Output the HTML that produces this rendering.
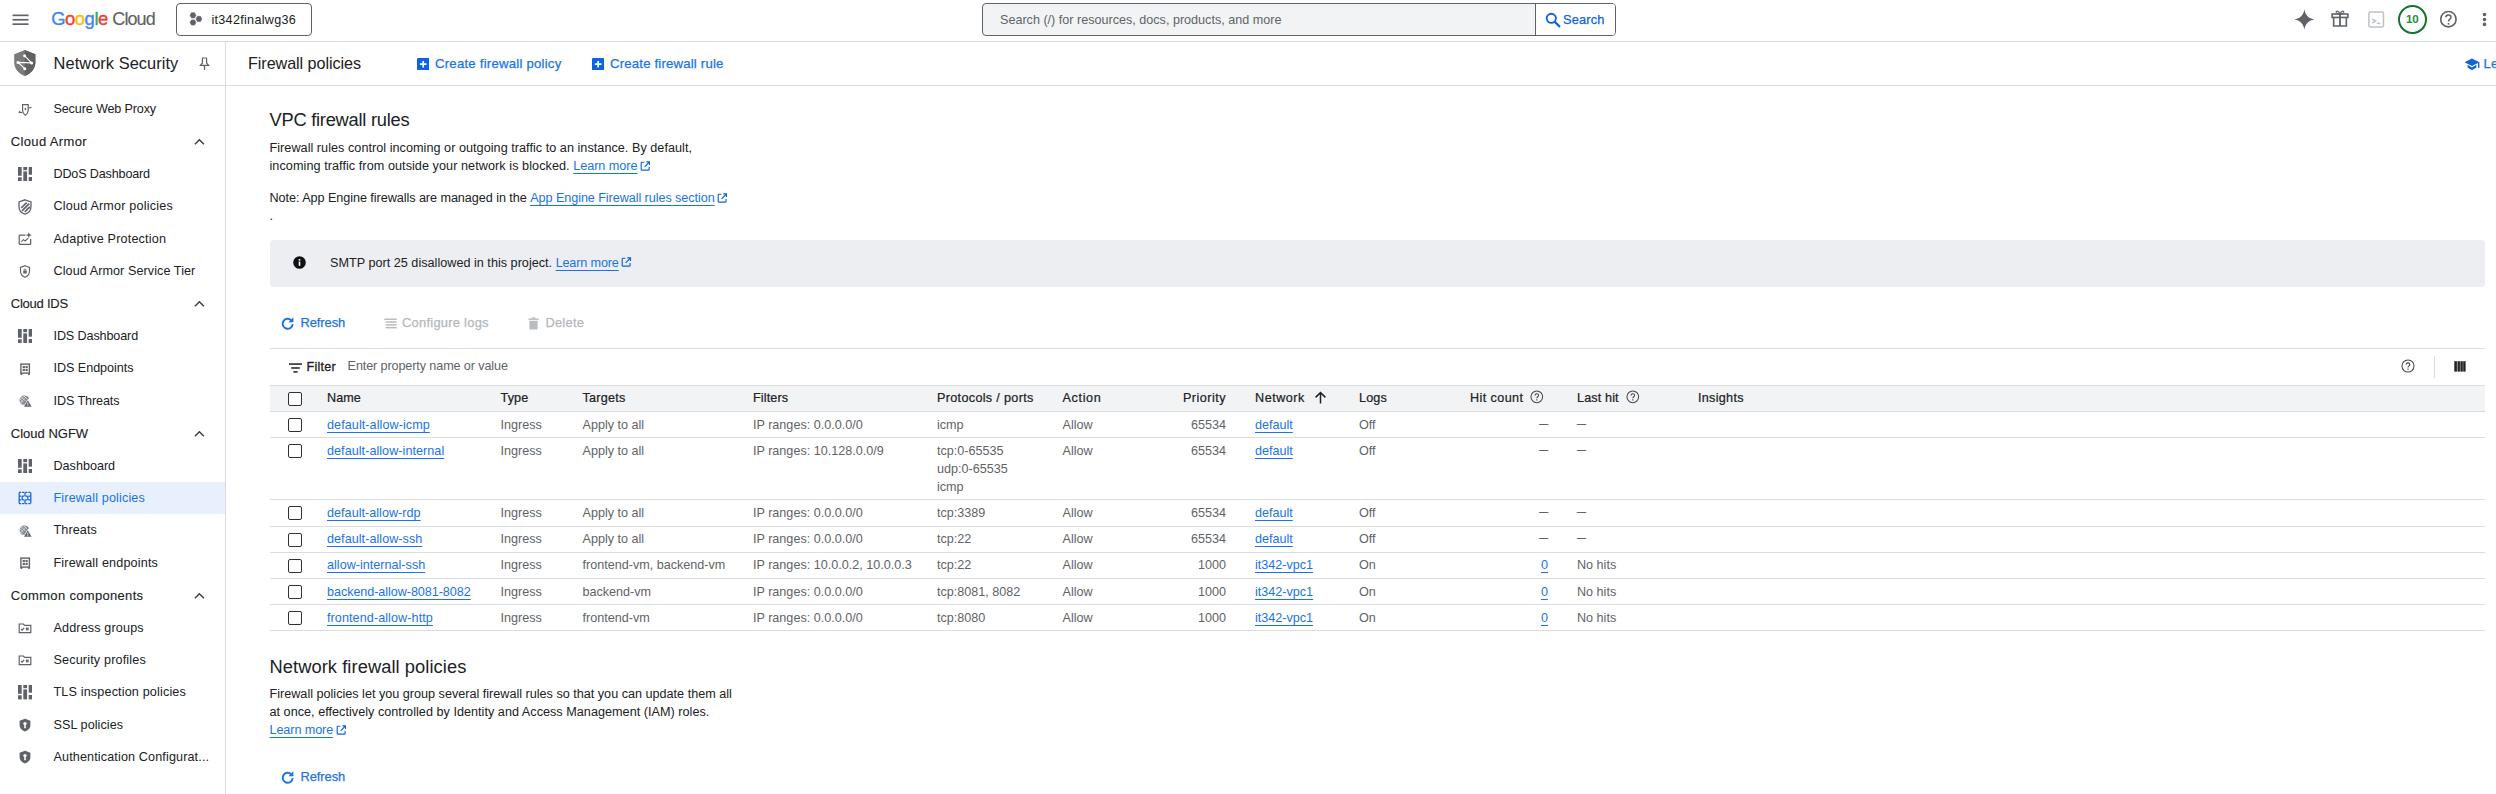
<!DOCTYPE html>
<html lang="en">
<head>
<meta charset="utf-8">
<title>Firewall policies – Network Security – it342finalwg36 – Google Cloud console</title>
<style>
*{box-sizing:border-box;margin:0;padding:0}
html,body{width:2496px;height:794px;overflow:hidden;background:#fff}
body{font-family:"Liberation Sans",Arial,sans-serif;font-size:12.6px;color:#202124;position:relative}
a{color:#1a73e8;text-decoration:underline;text-underline-offset:3px;text-decoration-thickness:1px}
svg{display:block}
.abs{position:absolute}
/* top bar */
#topbar{position:absolute;left:0;top:0;width:2496px;height:42px;border-bottom:1px solid #dadce0;background:#fff}
#subbar{position:absolute;left:0;top:42px;width:2496px;height:44px;border-bottom:1px solid #dadce0;background:#fff}
#side{position:absolute;left:0;top:42px;width:226px;height:752px;border-right:1px solid #dadce0}
.gs{-webkit-text-stroke:0.25px currentColor}
.sec .gs{-webkit-text-stroke:0.12px currentColor}
/* sidebar */
.nav{position:absolute;left:0;width:225px;height:32.4px;line-height:32.4px;white-space:nowrap}
.nav .t{position:absolute;left:53.5px;top:0}
.nav .ic{position:absolute;left:18px;top:9.2px;width:14px;height:14px}
.sec{position:absolute;left:0;width:225px;height:32.4px;line-height:32.4px;white-space:nowrap}
.sec .t{position:absolute;left:10.8px;top:0.6px;font-size:13px}
.sec .ch{position:absolute;left:194.4px;top:12.6px}
.nav.sel{background:#e8f0fe;color:#1a73e8}
/* main */
#main{position:absolute;left:0;top:0;width:2496px;height:794px}
.h2{position:absolute;left:269.5px;font-size:18.3px;white-space:nowrap;color:#202124;letter-spacing:0.05px}
.p{position:absolute;left:269.5px;line-height:18px;white-space:nowrap;font-size:12.65px}
.btn{position:absolute;white-space:nowrap;font-size:12.9px;color:#1a73e8;letter-spacing:0.15px}
.btn.dis{color:#b4b7bb}
/* table */
.row{position:absolute;left:270px;width:2215px;border-bottom:1px solid #dadce0;color:#5f6368}
.row span,.row a{position:absolute;top:3.5px;line-height:18px;white-space:nowrap}
.row .cb{position:absolute;left:18px;top:6px;width:14px;height:14px;border:1.5px solid #303134;border-radius:2px;background:#fff}
.row .ds{font-size:8.9px;top:2.6px;color:#3c4043;-webkit-text-stroke:0.2px #3c4043}
.hd{background:#f1f3f4;color:#202124}
.hd span{-webkit-text-stroke:0.22px #202124;top:3px}
.c1{left:57px}.c2{left:230.5px}.c3{left:312.5px}.c4{left:483px}.c5{left:667px}.c6{left:792.5px}
.c7{right:1259px;text-align:right}.c8{left:985px}.c9{left:1089px}.c10{right:937px;text-align:right}.c11{left:1307px}.c12{left:1428px}
</style>
</head>
<body>
<div id="topbar">
<svg class="abs" style="left:12px;top:14px" width="17" height="12" viewBox="0 0 17 12" fill="#5f6368"><rect x="0.5" y="0.5" width="16" height="1.7"/><rect x="0.5" y="4.9" width="16" height="1.7"/><rect x="0.5" y="9.3" width="16" height="1.7"/></svg>
<div class="abs" id="logo" style="left:51.2px;top:7.5px;font-size:18.4px;line-height:22px;white-space:nowrap;letter-spacing:-0.45px;-webkit-text-stroke:0.35px currentColor"><span style="color:#4285f4">G</span><span style="color:#ea4335">o</span><span style="color:#fbbc04">o</span><span style="color:#4285f4">g</span><span style="color:#34a853">l</span><span style="color:#ea4335">e</span></div>
<div class="abs" style="left:112.3px;top:7.5px;font-size:18px;line-height:22px;white-space:nowrap;color:#5f6368;-webkit-text-stroke:0.15px #5f6368;letter-spacing:-0.908px">Cloud</div>
<div class="abs" style="left:176px;top:3px;width:136px;height:33px;border:1px solid #5f6368;border-radius:4px"></div>
<svg class="abs" style="left:189px;top:11px" width="14" height="16" viewBox="189 11 14 16" fill="#5f6368" stroke="#5f6368" stroke-width="0.6" stroke-linejoin="round"><path d="M190.05 15.3 L191.50 12.70 H194.50 L195.95 15.3 L194.50 17.90 H191.50 Z"/><path d="M190.05 22.5 L191.50 19.90 H194.50 L195.95 22.5 L194.50 25.10 H191.50 Z"/><path d="M195.95 18.9 L197.40 16.30 H200.40 L201.85 18.9 L200.40 21.50 H197.40 Z"/></svg>
<div class="abs" style="left:211.4px;top:10.5px;line-height:18px;letter-spacing:0.3px;color:#202124;white-space:nowrap">it342finalwg36</div>
<div class="abs" style="left:982px;top:3px;width:634px;height:33px;border:1px solid #5f6368;border-radius:4px;background:#f1f3f4;overflow:hidden"><div style="position:absolute;left:552px;top:0;width:81px;height:31px;background:#fff;border-left:1px solid #5f6368"></div></div>
<div class="abs" style="left:1000px;top:10.5px;line-height:18px;color:#5f6368;white-space:nowrap">Search (/) for resources, docs, products, and more</div>
<svg class="abs" style="left:1545px;top:11.5px" width="16" height="16" viewBox="0 0 16 16" fill="none" stroke="#0e64dc" stroke-width="1.9"><circle cx="6.3" cy="6.3" r="4.6"/><path d="M9.6 9.6 L15 15" stroke-width="2.2"/></svg>
<div class="abs gs" style="left:1563px;top:10.5px;line-height:18px;color:#0e64dc;white-space:nowrap;letter-spacing:0.15px;font-size:12.8px">Search</div>
<svg class="abs" style="left:2294.2px;top:9.3px" width="20.8" height="20.8" viewBox="0 0 20 20" fill="#5f6368"><path d="M10 0.2 C10.8 5.8 14.2 9.2 19.8 10 C14.2 10.8 10.8 14.2 10 19.8 C9.2 14.2 5.8 10.8 0.2 10 C5.8 9.2 9.2 5.8 10 0.2 Z"/></svg>
<svg class="abs" style="left:2331.4px;top:8.9px" width="18" height="18.6" viewBox="0 0 19 19" fill="none" stroke="#5f6368" stroke-width="1.7"><rect x="1.2" y="5" width="16.6" height="3.6"/><path d="M2.8 8.6 V17.6 H16.2 V8.6"/><path d="M9.5 5 V17.6" stroke-width="1.9"/><path d="M9.5 4.8 C8.2 1 4.6 1.4 5.6 3.6 C6.2 4.8 8 4.8 9.5 4.8 C11 4.8 12.8 4.8 13.4 3.6 C14.4 1.4 10.8 1 9.5 4.8Z" stroke-width="1.2"/></svg>
<svg class="abs" style="left:2367.5px;top:10.6px" width="17" height="17" viewBox="0 0 17 17" fill="none" stroke="#bdc1c6" stroke-width="1.5"><rect x="0.9" y="1" width="14.6" height="15" rx="1.6"/><path d="M4.2 7.8 L7.6 10 L4.2 12.2" stroke-width="1.5"/><path d="M8.8 12.4 H12.2" stroke-width="1.5"/></svg>
<div class="abs" style="left:2397.7px;top:5px;width:29px;height:29px;border:2.1px solid #137333;border-radius:50%"></div>
<div class="abs" style="left:2397.7px;top:10.1px;width:29px;text-align:center;font-size:11.6px;line-height:18px;font-weight:700;color:#1e8e3e;letter-spacing:-0.3px">10</div>
<svg class="abs" style="left:2438.9px;top:10px" width="19" height="19" viewBox="0 0 19 19" fill="none" stroke="#5f6368" stroke-width="1.6"><circle cx="9.4" cy="9.2" r="7.7"/><path d="M6.9 7.3 C6.9 4.2 12 4.2 12 7.3 C12 9 9.5 9.2 9.5 11.4" stroke-width="1.5"/><path d="M9.5 13 V14.6" stroke-width="1.6"/></svg>
<svg class="abs" style="left:2482px;top:12px" width="5" height="15" viewBox="0 0 5 15" fill="#5f6368"><circle cx="2.5" cy="2.5" r="1.8"/><circle cx="2.5" cy="7.5" r="1.8"/><circle cx="2.5" cy="12.4" r="1.8"/></svg>
</div>
<div id="subbar">
<svg class="abs" style="left:13.5px;top:8px" width="22" height="26" viewBox="0 0 22 26"><path d="M10.7 0.1 L21.4 4.2 V12.2 C21.4 18.6 17 23.6 10.7 25.9 C4.4 23.6 0.2 18.6 0.2 12.2 V4.2 Z" fill="#7b7b7b"/><path d="M10.7 0.1 L21.4 4.2 V12.2 C21.4 18.6 17 23.6 10.7 25.9 Z" fill="#616161"/><path d="M10.6 5.8 L17.6 12.9 L4 12.4 L10.8 18.7" fill="none" stroke="#fff" stroke-width="1.1"/><circle cx="10.6" cy="5.8" r="1.5" fill="#fff"/><circle cx="4" cy="12.4" r="1.5" fill="#fff"/><circle cx="17.6" cy="12.9" r="1.5" fill="#fff"/><circle cx="10.8" cy="18.7" r="1.5" fill="#fff"/></svg>
<div class="abs" style="left:53.6px;top:10px;font-size:16.4px;line-height:22px;white-space:nowrap;color:#202124;letter-spacing:0.055px">Network Security</div>
<svg class="abs" style="left:198.5px;top:15px" width="11" height="14" viewBox="0 0 11 14" fill="none" stroke="#5f6368" stroke-width="1.2"><path d="M3 1 H8 M3.4 1 V6 L1.4 8.4 H9.6 L7.6 6 V1"/><path d="M5.5 8.4 V13" stroke-width="1.3"/></svg>
<div class="abs" style="left:248px;top:10px;font-size:16.2px;line-height:22px;white-space:nowrap;color:#202124;letter-spacing:-0.078px">Firewall policies</div>
<svg class="abs" style="left:416.5px;top:15.8px" width="12.4" height="12.4" viewBox="0 0 12.4 12.4"><rect width="12.4" height="12.4" rx="1.2" fill="#0e64dc"/><path d="M6.2 2.9 V9.5 M2.9 6.2 H9.5" stroke="#fff" stroke-width="1.7"/></svg>
<div class="btn gs" style="left:435px;top:13px;line-height:18px;font-size:13.2px;letter-spacing:0.22px">Create firewall policy</div>
<svg class="abs" style="left:591.5px;top:15.8px" width="12.4" height="12.4" viewBox="0 0 12.4 12.4"><rect width="12.4" height="12.4" rx="1.2" fill="#0e64dc"/><path d="M6.2 2.9 V9.5 M2.9 6.2 H9.5" stroke="#fff" stroke-width="1.7"/></svg>
<div class="btn gs" style="left:610px;top:13px;line-height:18px;font-size:13.2px;letter-spacing:0.18px">Create firewall rule</div>
<svg class="abs" style="left:2464.6px;top:15.6px" width="15" height="13" viewBox="0 0 15 13" fill="#0e64dc"><path d="M7 0.4 L14.4 4.2 L7 8 L-0.4 4.2 Z"/><path d="M2.6 6.8 V9.6 L7 12.2 L11.4 9.6 V6.8 L7 9.4 Z"/><rect x="13" y="4.2" width="1.4" height="5.6"/></svg>
<div class="btn gs" style="left:2483.6px;top:13px;line-height:18px;font-size:13.2px">Learn</div>
</div>
<div id="side"><div class="nav" style="top:51.2px"><svg class="ic" style="top:10px" viewBox="0 0 14 14" width="14" height="14" fill="none" stroke="#5f6368" stroke-width="1.2"><path d="M4.6 1.6 H10.2 V7.4 C10.2 9.6 8.9 11.2 7.4 12.2 C5.9 11.2 4.6 9.6 4.6 7.4 Z"/><circle cx="7.4" cy="6" r="1" fill="#5f6368" stroke="none"/><path d="M0.8 9 L4.2 9.6 M10.6 5 L13.6 4.2" stroke-width="1.1"/><path d="M2.2 7.8 L0.8 9 L2 10.4" stroke-width="0.9"/></svg><span class="t" style="letter-spacing:-0.144px">Secure Web Proxy</span></div>
<div class="sec" style="top:83.6px"><span class="t gs" style="letter-spacing:0.355px">Cloud Armor</span><svg class="ch" width="11" height="8" viewBox="0 0 11 8" fill="none" stroke="#3c4043" stroke-width="1.5"><path d="M0.9 6.2 L5.4 1.7 L9.9 6.2"/></svg></div>
<div class="nav" style="top:116.0px"><svg class="ic" style="left:17.7px;top:9.1px;width:14.4px;height:14.4px" viewBox="0 0 14.4 14.4" width="14.4" height="14.4" fill="#5f6368"><rect x="0" y="0" width="3.7" height="8.8"/><rect x="0" y="10.3" width="3.7" height="4.1"/><rect x="5.3" y="0" width="3.8" height="3.2"/><rect x="5.3" y="4.4" width="3.8" height="10"/><rect x="10.7" y="0" width="3.7" height="7.7"/><rect x="10.7" y="10" width="3.7" height="4.4"/></svg><span class="t" style="letter-spacing:-0.162px">DDoS Dashboard</span></div>
<div class="nav" style="top:148.4px"><svg class="ic" style="left:18px;top:8.6px;width:14px;height:16px" viewBox="0 0 14 16" width="14" height="16" fill="none" stroke="#5f6368" stroke-width="1.3"><path d="M7 0.8 L13 3 V7.6 C13 11.2 10.4 14.2 7 15.2 C3.6 14.2 1 11.2 1 7.6 V3 Z"/><path d="M3.2 9 L8.6 3.6 M4 11.8 L11.2 4.6 M6.8 12.8 L11.8 7.8" stroke-width="1.7"/></svg><span class="t" style="letter-spacing:0.195px">Cloud Armor policies</span></div>
<div class="nav" style="top:180.8px"><svg class="ic" viewBox="0 0 14 14" width="14" height="14" fill="none" stroke="#5f6368" stroke-width="1.25"><path d="M7.4 3.2 H1.9 C1.5 3.2 1.2 3.5 1.2 3.9 V11.7 C1.2 12.1 1.5 12.4 1.9 12.4 H12 C12.4 12.4 12.7 12.1 12.7 11.7 V7"/><path d="M3.2 9.6 L5.4 7.6 L7.2 9 L10.2 6.2" stroke-width="1.1"/><path d="M10.8 0 L11.6 2.3 L13.9 3.1 L11.6 3.9 L10.8 6.2 L10 3.9 L7.7 3.1 L10 2.3 Z" fill="#5f6368" stroke="none"/></svg><span class="t" style="letter-spacing:0.177px">Adaptive Protection</span></div>
<div class="nav" style="top:213.2px"><svg class="ic" viewBox="0 0 14 14" width="14" height="14" fill="none" stroke="#5f6368" stroke-width="1.15"><path d="M7 1.7 L11.5 3.4 V7 C11.5 9.8 9.7 12.2 7 13.3 C4.3 12.2 2.5 9.8 2.5 7 V3.4 Z"/><rect x="5.2" y="6.6" width="3.6" height="2.9" rx="0.4" fill="#5f6368" stroke="none"/><path d="M6 6.6 V5.9 C6 5.3 6.4 4.9 7 4.9 C7.6 4.9 8 5.3 8 5.9 V6.6" stroke-width="0.8"/></svg><span class="t" style="letter-spacing:0.079px">Cloud Armor Service Tier</span></div>
<div class="sec" style="top:245.6px"><span class="t gs" style="letter-spacing:-0.231px">Cloud IDS</span><svg class="ch" width="11" height="8" viewBox="0 0 11 8" fill="none" stroke="#3c4043" stroke-width="1.5"><path d="M0.9 6.2 L5.4 1.7 L9.9 6.2"/></svg></div>
<div class="nav" style="top:278.0px"><svg class="ic" style="left:17.7px;top:9.1px;width:14.4px;height:14.4px" viewBox="0 0 14.4 14.4" width="14.4" height="14.4" fill="#5f6368"><rect x="0" y="0" width="3.7" height="8.8"/><rect x="0" y="10.3" width="3.7" height="4.1"/><rect x="5.3" y="0" width="3.8" height="3.2"/><rect x="5.3" y="4.4" width="3.8" height="10"/><rect x="10.7" y="0" width="3.7" height="7.7"/><rect x="10.7" y="10" width="3.7" height="4.4"/></svg><span class="t" style="letter-spacing:-0.117px">IDS Dashboard</span></div>
<div class="nav" style="top:310.4px"><svg class="ic" viewBox="0 0 14 14" width="14" height="14" fill="none" stroke="#5f6368" stroke-width="1.4"><rect x="2.9" y="2.1" width="8.5" height="9"/><path d="M3.4 11.1 V12.9 M10.9 11.1 V12.9" stroke-width="1.6" fill="none"/><rect x="4.7" y="3.9" width="2.2" height="2.2" fill="#5f6368" stroke="none"/><rect x="7.5" y="3.9" width="2.2" height="2.2" fill="#5f6368" stroke="none"/><rect x="4.7" y="6.9" width="2.2" height="2.2" fill="#5f6368" stroke="none"/><rect x="7.5" y="6.9" width="2.2" height="2.2" fill="#5f6368" stroke="none"/></svg><span class="t" style="letter-spacing:-0.043px">IDS Endpoints</span></div>
<div class="nav" style="top:342.8px"><svg class="ic" style="left:19.4px" viewBox="0 0 14 14" width="14" height="14" fill="#5f6368"><path d="M5.6 1.4 C7.8 1.4 9.4 2.6 10 4.4 L8.4 5.6 L5.4 10.8 H3.4 C1.6 10 0.6 8.2 0.6 6.4 C0.6 3.4 2.8 1.4 5.6 1.4 Z" fill="#80868b"/><path d="M8.8 6.2 L12.6 12.8 H5 Z"/><path d="M8.8 8.6 V10.6 M8.8 11.2 V12" stroke="#fff" stroke-width="0.9"/><path d="M1.4 5 L4.6 8.4 M2.6 3 L6.4 7 M4.8 1.8 L8 5 M1.2 7.6 L3.6 10.2" stroke="#fff" stroke-width="0.7"/><path d="M1.6 8.6 L7.6 2.6 M1 5.6 L4.6 2" stroke="#fff" stroke-width="0.5"/></svg><span class="t" style="letter-spacing:-0.097px">IDS Threats</span></div>
<div class="sec" style="top:375.2px"><span class="t gs" style="letter-spacing:0.000px">Cloud NGFW</span><svg class="ch" width="11" height="8" viewBox="0 0 11 8" fill="none" stroke="#3c4043" stroke-width="1.5"><path d="M0.9 6.2 L5.4 1.7 L9.9 6.2"/></svg></div>
<div class="nav" style="top:407.6px"><svg class="ic" style="left:17.7px;top:9.1px;width:14.4px;height:14.4px" viewBox="0 0 14.4 14.4" width="14.4" height="14.4" fill="#5f6368"><rect x="0" y="0" width="3.7" height="8.8"/><rect x="0" y="10.3" width="3.7" height="4.1"/><rect x="5.3" y="0" width="3.8" height="3.2"/><rect x="5.3" y="4.4" width="3.8" height="10"/><rect x="10.7" y="0" width="3.7" height="7.7"/><rect x="10.7" y="10" width="3.7" height="4.4"/></svg><span class="t" style="letter-spacing:-0.003px">Dashboard</span></div>
<div class="nav sel" style="top:440.0px"><svg class="ic" viewBox="0 0 14 14" width="14" height="14" fill="none" stroke="#0e64dc" stroke-width="1.25"><path d="M1 1.4 H13 M1 5.1 H13 M1 8.9 H13 M1 12.6 H13" stroke-dasharray="2.2 0.9"/><path d="M1.2 1.4 V12.6 M12.8 1.4 V12.6"/><path d="M7 1.4 V5.1 M4.2 5.1 V8.9 M9.8 5.1 V8.9 M7 8.9 V12.6"/></svg><span class="t" style="letter-spacing:0.151px">Firewall policies</span></div>
<div class="nav" style="top:472.4px"><svg class="ic" style="left:19.4px" viewBox="0 0 14 14" width="14" height="14" fill="#5f6368"><path d="M5.6 1.4 C7.8 1.4 9.4 2.6 10 4.4 L8.4 5.6 L5.4 10.8 H3.4 C1.6 10 0.6 8.2 0.6 6.4 C0.6 3.4 2.8 1.4 5.6 1.4 Z" fill="#80868b"/><path d="M8.8 6.2 L12.6 12.8 H5 Z"/><path d="M8.8 8.6 V10.6 M8.8 11.2 V12" stroke="#fff" stroke-width="0.9"/><path d="M1.4 5 L4.6 8.4 M2.6 3 L6.4 7 M4.8 1.8 L8 5 M1.2 7.6 L3.6 10.2" stroke="#fff" stroke-width="0.7"/><path d="M1.6 8.6 L7.6 2.6 M1 5.6 L4.6 2" stroke="#fff" stroke-width="0.5"/></svg><span class="t" style="letter-spacing:0.116px">Threats</span></div>
<div class="nav" style="top:504.8px"><svg class="ic" viewBox="0 0 14 14" width="14" height="14" fill="none" stroke="#5f6368" stroke-width="1.4"><rect x="2.9" y="2.1" width="8.5" height="9"/><path d="M3.4 11.1 V12.9 M10.9 11.1 V12.9" stroke-width="1.6" fill="none"/><rect x="4.7" y="3.9" width="2.2" height="2.2" fill="#5f6368" stroke="none"/><rect x="7.5" y="3.9" width="2.2" height="2.2" fill="#5f6368" stroke="none"/><rect x="4.7" y="6.9" width="2.2" height="2.2" fill="#5f6368" stroke="none"/><rect x="7.5" y="6.9" width="2.2" height="2.2" fill="#5f6368" stroke="none"/></svg><span class="t" style="letter-spacing:0.170px">Firewall endpoints</span></div>
<div class="sec" style="top:537.2px"><span class="t gs" style="letter-spacing:0.321px">Common components</span><svg class="ch" width="11" height="8" viewBox="0 0 11 8" fill="none" stroke="#3c4043" stroke-width="1.5"><path d="M0.9 6.2 L5.4 1.7 L9.9 6.2"/></svg></div>
<div class="nav" style="top:569.6px"><svg class="ic" viewBox="0 0 14 14" width="14" height="14" fill="none" stroke="#5f6368" stroke-width="1.2"><path d="M1.2 3 H5.4 L6.6 4.3 H12.8 V11.6 H1.2 Z"/><path d="M3.1 8 L4.2 9.1 L6.2 6.8" stroke-width="1.25"/><path d="M8.1 6.8 L10.5 9.2 M10.5 6.8 L8.1 9.2" stroke-width="1.25"/></svg><span class="t" style="letter-spacing:0.145px">Address groups</span></div>
<div class="nav" style="top:602.0px"><svg class="ic" viewBox="0 0 14 14" width="14" height="14" fill="none" stroke="#5f6368" stroke-width="1.2"><path d="M1.2 3 H5.4 L6.6 4.3 H12.8 V11.6 H1.2 Z"/><path d="M3.1 8 L4.2 9.1 L6.2 6.8" stroke-width="1.25"/><path d="M8.1 6.8 L10.5 9.2 M10.5 6.8 L8.1 9.2" stroke-width="1.25"/></svg><span class="t" style="letter-spacing:0.163px">Security profiles</span></div>
<div class="nav" style="top:634.4px"><svg class="ic" style="left:17.7px;top:9.1px;width:14.4px;height:14.4px" viewBox="0 0 14.4 14.4" width="14.4" height="14.4" fill="#5f6368"><rect x="0" y="0" width="3.7" height="8.8"/><rect x="0" y="10.3" width="3.7" height="4.1"/><rect x="5.3" y="0" width="3.8" height="3.2"/><rect x="5.3" y="4.4" width="3.8" height="10"/><rect x="10.7" y="0" width="3.7" height="7.7"/><rect x="10.7" y="10" width="3.7" height="4.4"/></svg><span class="t" style="letter-spacing:0.159px">TLS inspection policies</span></div>
<div class="nav" style="top:666.8px"><svg class="ic" viewBox="0 0 14 14" width="14" height="14"><path d="M7 0.8 L12.4 2.8 V7 C12.4 10.1 10.1 12.6 7 13.4 C3.9 12.6 1.6 10.1 1.6 7 V2.8 Z" fill="#5f6368"/><circle cx="7" cy="5.6" r="1.7" fill="#fff"/><rect x="6.2" y="6.4" width="1.6" height="3.8" fill="#fff"/></svg><span class="t" style="letter-spacing:0.069px">SSL policies</span></div>
<div class="nav" style="top:699.2px"><svg class="ic" viewBox="0 0 14 14" width="14" height="14"><path d="M7 0.8 L12.4 2.8 V7 C12.4 10.1 10.1 12.6 7 13.4 C3.9 12.6 1.6 10.1 1.6 7 V2.8 Z" fill="#5f6368"/><circle cx="7" cy="5.6" r="1.7" fill="#fff"/><rect x="6.2" y="6.4" width="1.6" height="3.8" fill="#fff"/></svg><span class="t" style="letter-spacing:0.133px">Authentication Configurat...</span></div></div>
<div id="main">
<div class="h2" style="top:108.4px;line-height:24px;letter-spacing:-0.245px">VPC firewall rules</div>
<div class="p" style="top:139px"><span style="letter-spacing:0.033px">Firewall rules control incoming or outgoing traffic to an instance. By default,</span><br><span style="letter-spacing:0.059px">incoming traffic from outside your network is blocked. </span><a href="#" style="letter-spacing:-0.045px">Learn more</a><svg style="display:inline-block;vertical-align:-1.2px;margin-left:2.6px" width="10.4" height="10.4" viewBox="0 0 10.4 10.4" fill="none" stroke="#0e64dc" stroke-width="1.15"><path d="M4.4 1.3 H2 C1.5 1.3 1.2 1.6 1.2 2.1 V8.4 C1.2 8.9 1.5 9.2 2 9.2 H8.3 C8.8 9.2 9.1 8.9 9.1 8.4 V6"/><path d="M6.3 0.9 H9.5 V4.1 M9.4 1 L4.6 5.8"/></svg></div>
<div class="p" style="top:189px"><span style="letter-spacing:-0.062px">Note: App Engine firewalls are managed in the </span><a href="#" style="letter-spacing:-0.075px">App Engine Firewall rules section</a><svg style="display:inline-block;vertical-align:-1.2px;margin-left:2.6px" width="10.4" height="10.4" viewBox="0 0 10.4 10.4" fill="none" stroke="#0e64dc" stroke-width="1.15"><path d="M4.4 1.3 H2 C1.5 1.3 1.2 1.6 1.2 2.1 V8.4 C1.2 8.9 1.5 9.2 2 9.2 H8.3 C8.8 9.2 9.1 8.9 9.1 8.4 V6"/><path d="M6.3 0.9 H9.5 V4.1 M9.4 1 L4.6 5.8"/></svg><br>.</div>
<div class="abs" style="left:270px;top:240px;width:2215px;height:47px;background:#eceef2;border-radius:4px"></div>
<svg class="abs" style="left:293.1px;top:256.3px" width="13" height="13" viewBox="0 0 13 13"><circle cx="6.5" cy="6.5" r="6.3" fill="#111"/><rect x="5.7" y="5.6" width="1.6" height="4.2" fill="#fff"/><rect x="5.7" y="3.1" width="1.6" height="1.6" fill="#fff"/></svg>
<div class="p" style="left:330px;top:253.5px"><span style="letter-spacing:0.008px">SMTP port 25 disallowed in this project. </span><a href="#" style="letter-spacing:-0.156px">Learn more</a><svg style="display:inline-block;vertical-align:-1.2px;margin-left:2.6px" width="10.4" height="10.4" viewBox="0 0 10.4 10.4" fill="none" stroke="#0e64dc" stroke-width="1.15"><path d="M4.4 1.3 H2 C1.5 1.3 1.2 1.6 1.2 2.1 V8.4 C1.2 8.9 1.5 9.2 2 9.2 H8.3 C8.8 9.2 9.1 8.9 9.1 8.4 V6"/><path d="M6.3 0.9 H9.5 V4.1 M9.4 1 L4.6 5.8"/></svg></div>
<svg class="abs" style="left:281.3px;top:317px" width="13.4" height="13.4" viewBox="0 0 13.4 13.4" fill="none" stroke="#1a73e8" stroke-width="1.9"><path d="M10.3 3.3 A5 5 0 1 0 11.7 7.2"/><path d="M7.4 5.3 H12.4 V0.3 Z" fill="#1a73e8" stroke="none"/></svg>
<div class="btn gs" style="left:300.4px;top:313.5px;line-height:18px;letter-spacing:-0.040px">Refresh</div>
<svg class="abs" style="left:383.5px;top:318px" width="13" height="11" viewBox="0 0 13 11" fill="#b9bcc0"><rect x="0.3" y="0.5" width="12.4" height="1.5"/><rect x="1.6" y="3.3" width="11.1" height="1.5"/><rect x="1.6" y="6.1" width="11.1" height="1.5"/><rect x="1.6" y="8.9" width="11.1" height="1.5"/></svg>
<div class="btn dis gs" style="left:402px;top:313.5px;line-height:18px;letter-spacing:0.260px">Configure logs</div>
<svg class="abs" style="left:527.5px;top:317px" width="11" height="13" viewBox="0 0 11 13" fill="#b9bcc0"><rect x="0.4" y="1.4" width="10.2" height="1.5"/><rect x="3.6" y="0.4" width="3.8" height="1.4"/><path d="M1.4 3.8 H9.6 V11.4 C9.6 12 9.2 12.4 8.6 12.4 H2.4 C1.8 12.4 1.4 12 1.4 11.4 Z"/></svg>
<div class="btn dis gs" style="left:545.4px;top:313.5px;line-height:18px;letter-spacing:0.247px">Delete</div>
<div class="abs" style="left:270px;top:348px;width:2215px;height:1px;background:#dadce0"></div>
<svg class="abs" style="left:288.5px;top:362.6px" width="13" height="10" viewBox="0 0 13 10" fill="#3c4043"><rect x="0" y="0.2" width="13" height="1.75"/><rect x="2.2" y="4.1" width="8.6" height="1.75"/><rect x="4.4" y="8" width="4.2" height="1.75"/></svg>
<div class="abs" style="left:306.5px;top:357.5px;line-height:18px;color:#202124;-webkit-text-stroke:0.3px #202124;white-space:nowrap;letter-spacing:0.240px">Filter</div>
<div class="abs" style="left:347.6px;top:356.6px;line-height:18px;color:#5f6368;white-space:nowrap;letter-spacing:-0.104px">Enter property name or value</div>
<svg class="abs" style="left:2401px;top:359px" width="14" height="14" viewBox="0 0 13 13" fill="none" stroke="#444746" stroke-width="1"><circle cx="6.5" cy="6.5" r="5.6"/><path d="M4.8 5.2 C4.8 3.1 8.2 3.1 8.2 5.2 C8.2 6.4 6.5 6.5 6.5 7.9" stroke-width="1.05"/><path d="M6.5 8.9 V10" stroke-width="1.1"/></svg>
<div class="abs" style="left:2434px;top:356px;width:1px;height:22px;background:#dadce0"></div>
<svg class="abs" style="left:2454px;top:360.5px" width="12" height="11" viewBox="0 0 12 11" fill="#202124"><rect x="0.3" y="0.2" width="2.6" height="10.4"/><rect x="3.5" y="0.2" width="2.4" height="10.4"/><rect x="6.4" y="0.2" width="2.4" height="10.4"/><rect x="9.2" y="0.2" width="2.4" height="10.4"/></svg>
<div class="row hd" style="top:385px;height:27px;border-top:1px solid #dadce0"><i class="cb"></i>
<span class="c1" style="letter-spacing:0.035px">Name</span><span class="c2" style="letter-spacing:0.163px">Type</span><span class="c3" style="letter-spacing:0.265px">Targets</span><span class="c4" style="letter-spacing:0.117px">Filters</span><span class="c5" style="letter-spacing:0.331px">Protocols / ports</span><span class="c6" style="letter-spacing:0.657px">Action</span><span class="c7" style="letter-spacing:0.488px">Priority</span><span class="c8" style="letter-spacing:0.535px">Network</span><span class="c9" style="letter-spacing:0.163px">Logs</span><span class="" style="letter-spacing:0.412px;left:1200px">Hit count</span><span class="c11" style="letter-spacing:0.142px">Last hit</span><span class="c12" style="letter-spacing:0.299px">Insights</span>
<svg class="abs" style="left:1043.6px;top:5px" width="13" height="13" viewBox="0 0 13 13" fill="none" stroke="#202124" stroke-width="1.5"><path d="M6.5 12.4 V1.6 M1.6 6.4 L6.5 1.5 L11.4 6.4"/></svg>
<svg class="abs" style="left:1260.3px;top:4.1px" width="13.6" height="13.6" viewBox="0 0 13 13" fill="none" stroke="#444746" stroke-width="1"><circle cx="6.5" cy="6.5" r="5.6"/><path d="M4.8 5.2 C4.8 3.1 8.2 3.1 8.2 5.2 C8.2 6.4 6.5 6.5 6.5 7.9" stroke-width="1.05"/><path d="M6.5 8.9 V10" stroke-width="1.1"/></svg><svg class="abs" style="left:1356.2px;top:4.1px" width="13.6" height="13.6" viewBox="0 0 13 13" fill="none" stroke="#444746" stroke-width="1"><circle cx="6.5" cy="6.5" r="5.6"/><path d="M4.8 5.2 C4.8 3.1 8.2 3.1 8.2 5.2 C8.2 6.4 6.5 6.5 6.5 7.9" stroke-width="1.05"/><path d="M6.5 8.9 V10" stroke-width="1.1"/></svg>
</div>
<div class="row" style="top:412px;height:26.2px"><i class="cb"></i><a class="c1" href="#" style="letter-spacing:0.076px">default-allow-icmp</a><span class="c2">Ingress</span><span class="c3">Apply to all</span><span class="c4">IP ranges: 0.0.0.0/0</span><span class="c5" style="top:3.5px">icmp</span><span class="c6">Allow</span><span class="c7">65534</span><a class="c8" href="#">default</a><span class="c9">Off</span><span class="c10 ds">—</span><span class="c11 ds">—</span></div>
<div class="row" style="top:438.2px;height:62.2px"><i class="cb"></i><a class="c1" href="#" style="letter-spacing:0.047px">default-allow-internal</a><span class="c2">Ingress</span><span class="c3">Apply to all</span><span class="c4">IP ranges: 10.128.0.0/9</span><span class="c5" style="top:3.5px">tcp:0-65535</span><span class="c5" style="top:21.5px">udp:0-65535</span><span class="c5" style="top:39.5px">icmp</span><span class="c6">Allow</span><span class="c7">65534</span><a class="c8" href="#">default</a><span class="c9">Off</span><span class="c10 ds">—</span><span class="c11 ds">—</span></div>
<div class="row" style="top:500.4px;height:26.2px"><i class="cb"></i><a class="c1" href="#" style="letter-spacing:0.031px">default-allow-rdp</a><span class="c2">Ingress</span><span class="c3">Apply to all</span><span class="c4">IP ranges: 0.0.0.0/0</span><span class="c5" style="top:3.5px">tcp:3389</span><span class="c6">Allow</span><span class="c7">65534</span><a class="c8" href="#">default</a><span class="c9">Off</span><span class="c10 ds">—</span><span class="c11 ds">—</span></div>
<div class="row" style="top:526.6px;height:26.2px"><i class="cb"></i><a class="c1" href="#" style="letter-spacing:0.050px">default-allow-ssh</a><span class="c2">Ingress</span><span class="c3">Apply to all</span><span class="c4">IP ranges: 0.0.0.0/0</span><span class="c5" style="top:3.5px">tcp:22</span><span class="c6">Allow</span><span class="c7">65534</span><a class="c8" href="#">default</a><span class="c9">Off</span><span class="c10 ds">—</span><span class="c11 ds">—</span></div>
<div class="row" style="top:552.8px;height:26.2px"><i class="cb"></i><a class="c1" href="#" style="letter-spacing:0.012px">allow-internal-ssh</a><span class="c2">Ingress</span><span class="c3">frontend-vm, backend-vm</span><span class="c4">IP ranges: 10.0.0.2, 10.0.0.3</span><span class="c5" style="top:3.5px">tcp:22</span><span class="c6">Allow</span><span class="c7">1000</span><a class="c8" href="#">it342-vpc1</a><span class="c9">On</span><a class="c10" href="#">0</a><span class="c11">No hits</span></div>
<div class="row" style="top:579px;height:26.2px"><i class="cb"></i><a class="c1" href="#" style="letter-spacing:-0.056px">backend-allow-8081-8082</a><span class="c2">Ingress</span><span class="c3">backend-vm</span><span class="c4">IP ranges: 0.0.0.0/0</span><span class="c5" style="top:3.5px">tcp:8081, 8082</span><span class="c6">Allow</span><span class="c7">1000</span><a class="c8" href="#">it342-vpc1</a><span class="c9">On</span><a class="c10" href="#">0</a><span class="c11">No hits</span></div>
<div class="row" style="top:605.2px;height:26.2px"><i class="cb"></i><a class="c1" href="#" style="letter-spacing:0.083px">frontend-allow-http</a><span class="c2">Ingress</span><span class="c3">frontend-vm</span><span class="c4">IP ranges: 0.0.0.0/0</span><span class="c5" style="top:3.5px">tcp:8080</span><span class="c6">Allow</span><span class="c7">1000</span><a class="c8" href="#">it342-vpc1</a><span class="c9">On</span><a class="c10" href="#">0</a><span class="c11">No hits</span></div>
<div class="h2" style="top:654.5px;line-height:24px;letter-spacing:0.072px">Network firewall policies</div>
<div class="p" style="top:685px"><span style="letter-spacing:-0.008px">Firewall policies let you group several firewall rules so that you can update them all</span><br><span style="letter-spacing:0.021px">at once, effectively controlled by Identity and Access Management (IAM) roles.</span><br><a href="#" style="letter-spacing:-0.101px">Learn more</a><svg style="display:inline-block;vertical-align:-1.2px;margin-left:2.6px" width="10.4" height="10.4" viewBox="0 0 10.4 10.4" fill="none" stroke="#0e64dc" stroke-width="1.15"><path d="M4.4 1.3 H2 C1.5 1.3 1.2 1.6 1.2 2.1 V8.4 C1.2 8.9 1.5 9.2 2 9.2 H8.3 C8.8 9.2 9.1 8.9 9.1 8.4 V6"/><path d="M6.3 0.9 H9.5 V4.1 M9.4 1 L4.6 5.8"/></svg></div>
<svg class="abs" style="left:281.3px;top:771.2px" width="13.4" height="13.4" viewBox="0 0 13.4 13.4" fill="none" stroke="#1a73e8" stroke-width="1.9"><path d="M10.3 3.3 A5 5 0 1 0 11.7 7.2"/><path d="M7.4 5.3 H12.4 V0.3 Z" fill="#1a73e8" stroke="none"/></svg>
<div class="btn gs" style="left:300.4px;top:768px;line-height:18px;letter-spacing:-0.040px">Refresh</div>
</div>
</body>
</html>
